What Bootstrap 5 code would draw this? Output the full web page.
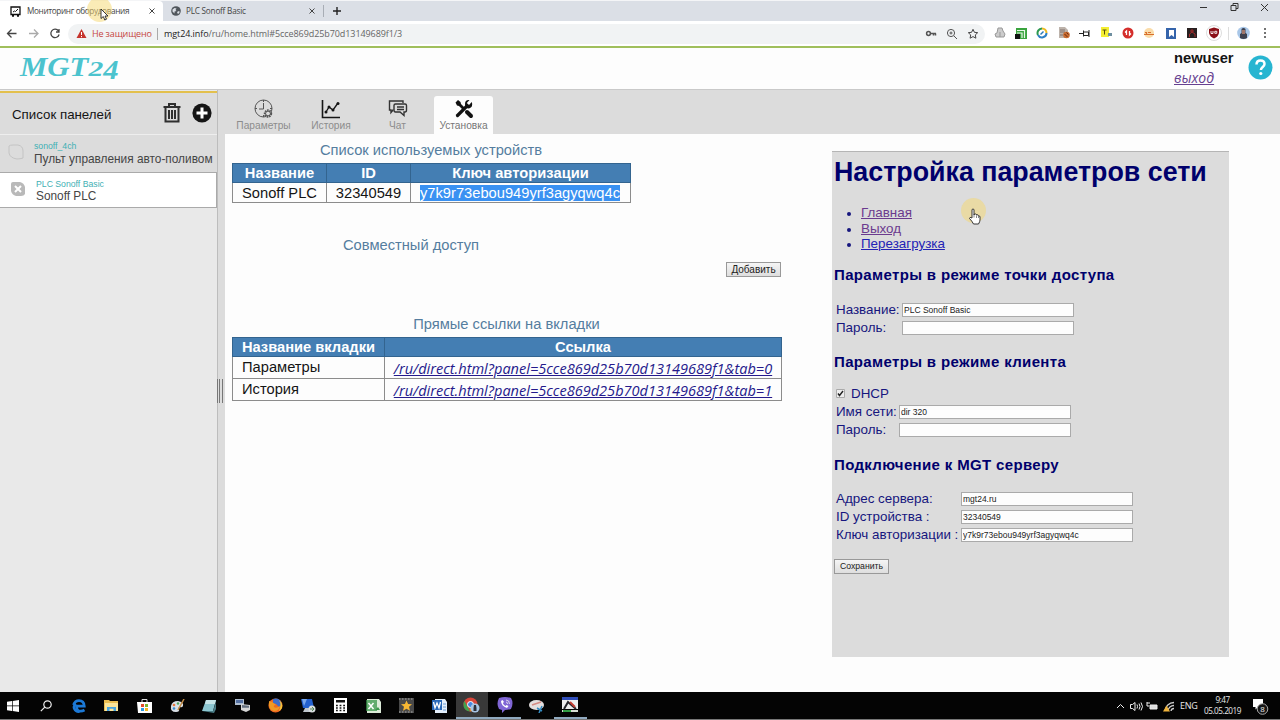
<!DOCTYPE html>
<html lang="ru">
<head>
<meta charset="utf-8">
<title>Мониторинг оборудования</title>
<link href="https://cdn.jsdelivr.net/npm/bootstrap@5.3.0/dist/css/bootstrap.min.css" rel="stylesheet">
<style>
body{width:1280px;height:720px;overflow:hidden;font:14.7px/18px "Liberation Sans",Arial,sans-serif;color:#151515;background:#fdfdfd;position:relative}
svg{display:block;flex:none}
.tabstrip{height:21px;background:#dbdfe6;border-top:1px solid #f4f5f7;font:8.2px/16px "Open Sans","Noto Sans",sans-serif;color:#454545}
.btab{height:20px}
.btab.on{width:163px;background:#fff;padding-left:10px;border-radius:0 4px 0 0}
.btab.off{width:160px;padding-left:8px}
.toolbar{height:25px;background:#fff}
.omni{height:20px;width:917px;margin-left:3px;background:#f1f3f4;border-radius:10px;padding-left:5px;font:9px/20px "Open Sans","Noto Sans",sans-serif;white-space:nowrap}
.cell{width:21.4px;display:flex;justify-content:center;flex:none}
.sitehead{height:44px;border-top:2px solid #a0bf5c;border-bottom:1px solid #c9c9c9;background:#fdfdfd}
.brand24{font:italic bold 27px/30px "Liberation Serif",serif;color:#4cc3ce;margin-left:20px;white-space:nowrap;transform:scaleX(1.14);transform-origin:0 50%}
.brand24 .two{font-size:26px;display:inline-block;transform:scaleY(.78);transform-origin:50% 76%}
.brand24 .four{display:inline-block;transform:translateY(3px)}
.side{width:218px;background:#e9e9e9;border-right:1px solid #bdbdbd}
.sidehead{height:44px;background:#dcdcdc;border-top:2px solid #e3c04d;border-bottom:1px solid #eee;padding:0 5px 0 12px;font-size:13.3px;margin-top:1px}
.panelitem{height:37px;background:#dcdcdc;color:#454545;font-size:11.85px;line-height:13px;white-space:nowrap}
.panelitem small{display:block;font-size:8.7px;line-height:12px;color:#3fb0b4}
.panelitem.sel{height:36px;background:#fff;border:1px solid #aaa;border-left:0}
.split{width:7px;background:#dcdcdc}
.grip{width:6px;height:24px;background:repeating-linear-gradient(90deg,#777 0 1px,#ddd 1px 2.4px)}
.tabsbar{height:44px;background:#dcdcdc;padding:6px 0 0 2px;font-size:10.2px;line-height:12px;color:#8c8c8c}
.apptab{height:38px;padding-top:3px;display:flex;flex-direction:column;align-items:center;justify-content:space-between;padding-bottom:2px}
.apptab.on{background:#fdfdfd;border-radius:3px 3px 0 0;color:#777}
.cap{color:#557d9f;text-align:center;font-size:14.7px;line-height:18px;white-space:nowrap}
.grid{border-collapse:collapse;table-layout:fixed;white-space:nowrap}
.grid th,.grid td{border:1px solid #8c8c8c;padding:0}
.grid th{background:#447eb3;color:#fff;text-align:center;border-color:#33648f;line-height:18px;height:19px}
.selx{background:#3991f2;color:#fff}
.dlink{font:italic 14.55px/20px "Open Sans","Noto Sans",sans-serif;color:#251a8c;text-decoration:underline}
.obtn{border:1px solid #999;background:linear-gradient(#f5f5f5,#dedede);color:#222;padding:0;border-radius:0;display:block;text-align:center}
.net{width:397px;height:506px;background:#dcdcdc;border-top:1px solid #b5b5b5;color:#16167e;margin:17px 0 0 51px;padding-left:2px;font-size:13.4px;line-height:18px;white-space:nowrap}
.net h1{font-size:26.8px;line-height:32px;font-weight:700;color:#00006c;margin:4px 0 17px}
.net h2{font-size:15px;line-height:18px;font-weight:700;color:#00006c;margin:0;letter-spacing:.35px}
.net ul{margin:0;padding-left:27px;line-height:15.5px;font-size:13.4px}
.net li::marker{font-size:12px}
.net a{text-decoration:underline}
.frow{display:flex;height:18px;align-items:center;padding-left:2px}
.fld{width:172px;height:14px;border:1px solid #aaa;background:#fdfdfd;font-size:8.5px;line-height:12px;padding:0 1px;color:#222;border-radius:0}
.task{height:27px;background:#040404;margin-top:0;font:9px/12px "Open Sans","Noto Sans",sans-serif;color:#e8e8e8}
.tcell{width:32.75px;height:27px;display:flex;align-items:center;justify-content:center;flex:none}
.tcell.run{border-bottom:2px solid #8fa9bf}
.glow{position:absolute;width:25px;height:25px;border-radius:50%;background:rgba(245,215,110,.5)}
.ptr{position:absolute}
</style>
</head>
<body class="d-flex flex-column">

<div class="tabstrip d-flex">
  <div class="btab on d-flex align-items-center">
    <svg width="11" height="11" viewBox="0 0 11 11"><path d="M1 1h9v7.500H1zM2 10h2M7 10h2" fill="none" stroke="#111" stroke-width="1.300"/><path d="M3 6l1.500-1 1 .5L8 3" fill="none" stroke="#111"/></svg>
    <span style="margin-left:6px;letter-spacing:-.35px">Мониторинг оборудования</span>
    <svg class="ms-auto" width="6" height="6" style="margin-right:8px" viewBox="0 0 6 6"><path d="M.5.5l5 5m0-5l-5 5" stroke="#444"/></svg>
  </div>
  <div class="btab off d-flex align-items-center">
    <svg width="10" height="10" viewBox="0 0 10 10"><circle cx="5" cy="5" r="4.800" fill="#50565c"/><path d="M1.500 3.500l2-1.500 2 .5-1 1.500 1 1-2 .5v2l-2-2zM6 6l2-1 .8 1-1.800 2.300z" fill="#dbdfe6"/></svg>
    <span style="margin-left:5px;letter-spacing:-.22px">PLC Sonoff Basic</span>
    <svg class="ms-auto" width="6" height="6" style="margin-right:8px" viewBox="0 0 6 6"><path d="M.5.5l5 5m0-5l-5 5" stroke="#444"/></svg>
  </div>
  <div class="d-flex align-items-center"><svg width="24" height="14" viewBox="0 0 24 14"><path d="M.5 1v12" stroke="#a8adb5"/><path d="M14 3v8m-4-4h8" stroke="#222" stroke-width="1.400"/></svg></div>
  <svg class="ms-auto" width="82" height="14" viewBox="0 0 82 14"><path d="M2 6.500h7M33 4.500h5v5h-5zM35 4.500v-2h5v5h-2M63 3l7 7m0-7l-7 7" fill="none" stroke="#333"/></svg>
</div>

<div class="toolbar d-flex align-items-center">
  <svg width="65" height="16" viewBox="0 0 65 16" fill="none" stroke-width="1.300"><path d="M16.500 7.500H8m3.500-4L7.500 7.500l4 4" stroke="#444"/><path d="M29 7.500h9m-4-4l4 4-4 4" stroke="#aaa"/><path d="M58.500 5a4.200 4.200 0 1 0 .6 3.500M59 3v3h-3" stroke="#444"/></svg>
  <div class="omni d-flex align-items-center">
    <svg style="margin-left:3px" width="11" height="11" viewBox="0 0 11 11"><path d="M5.500 1L10.500 10H.5z" fill="#c5342d"/><path d="M5.500 4v3m0 1v1.200" stroke="#fff"/></svg>
    <span style="margin-left:5px;color:#c5453f;width:60px;letter-spacing:-.15px">Не защищено</span>
    <span style="border-left:1px solid #aaa;height:12px;margin:0 6px 0 5px"></span>
    <span style="color:#666;letter-spacing:-.08px"><span style="color:#222">mgt24.info</span>/ru/home.html#5cce869d25b70d13149689f1/3</span>
    <div class="d-flex ms-auto" style="margin-right:1px">
      <span class="cell"><svg width="12" height="12" viewBox="0 0 12 12" fill="none" stroke="#555" stroke-width="1.500"><circle cx="3.500" cy="5.500" r="1.900"/><path d="M5.500 5.500H11M8.500 5.500v2M10.500 5.500v2"/></svg></span>
      <span class="cell"><svg width="12" height="12" viewBox="0 0 12 12" fill="none" stroke="#555"><circle cx="5" cy="5" r="3.600"/><path d="M8 8l3 3M3.500 5h3M5 3.500v3"/></svg></span>
      <span class="cell"><svg width="12" height="12" viewBox="0 0 12 12" fill="none" stroke="#444"><path d="M6 1.300l1.400 3 3.300.4-2.400 2.200.6 3.300L6 8.600l-2.900 1.600.6-3.300L1.300 4.700l3.300-.4z"/></svg></span>
    </div>
  </div>
  <div class="d-flex align-items-center" style="margin:-1px 0 0 4px">
    <span class="cell"><svg width="12" height="12" viewBox="0 0 12 12"><path d="M4 1h4l1 3 2 3-1 3H2L1 7l2-1zM6 5v5" fill="#ccc" stroke="#999"/></svg></span>
    <span class="cell"><svg width="12" height="12" viewBox="0 0 12 12"><path d="M1 1h11v11H1z" fill="#3aa43e"/><path d="M2 3.500h7.500V11M2 6h5v5" fill="none" stroke="#e8f7e8" stroke-width="1.200"/><path d="M0 7h5v5H0z" fill="#111"/></svg></span>
    <span class="cell"><svg width="12" height="12" viewBox="0 0 12 12" fill="none" stroke-width="2"><path d="M6 1.500A4.500 4.500 0 0 0 2 8" stroke="#2d9950"/><path d="M6 1.500A4.500 4.500 0 0 1 10.500 6" stroke="#edbb22"/><path d="M10.500 6A4.500 4.500 0 0 1 2 8" stroke="#2e80c4"/><path d="M4.500 7.500l3-3" stroke="#287ab8" stroke-width="1.500"/></svg></span>
    <span class="cell"><svg width="12" height="12" viewBox="0 0 12 12"><path d="M1 0h6l3 3v8H1z" fill="#bdb3ab"/><path d="M2 3h5M2 5h5M2 8h3" stroke="#80716a"/><circle cx="8.500" cy="8" r="3.300" fill="#c96a2e"/><path d="M6.500 7l3 3M8.500 5.500l2 2" stroke="#663015"/></svg></span>
    <span class="cell"><svg width="12" height="12" viewBox="0 0 12 12" fill="none" stroke="#222"><path d="M0 6.500h4M4.500 3.500v6M4.500 5h5v3.500h-5M10 3v7"/></svg></span>
    <span class="cell"><svg width="12" height="12" viewBox="0 0 12 12"><path d="M0 0h8v10H0z" fill="#f4ee32"/><path d="M1.500 3h4M3.500 3v4.500" stroke="#544c10"/><path d="M7 6h4v3H7z" fill="#6e8fa0"/></svg></span>
    <span class="cell"><svg width="12" height="12" viewBox="0 0 12 12"><circle cx="6" cy="6" r="5.500" fill="#d42d2a"/><path d="M4.500 8V4L3 5.500M7.500 4v4L9 6.500" stroke="#fff" stroke-width="1.300" fill="none"/></svg></span>
    <span class="cell"><svg width="12" height="12" viewBox="0 0 12 12"><circle cx="6" cy="6" r="5" fill="#fadcaa"/><path d="M1 7.500h10M2 5.500h1.500v2M5 5.500h3" stroke="#d9702d" stroke-width="1.200" fill="none"/></svg></span>
    <span class="cell"><svg width="12" height="12" viewBox="0 0 12 12"><path d="M1 1h10v11H1z" fill="#3564ab"/><path d="M4 3h5v7L6.500 8 4 10z" fill="#fff"/></svg></span>
    <span class="cell"><svg width="12" height="12" viewBox="0 0 12 12"><path d="M1 1h10v10H1z" fill="#272020"/><path d="M6 2v3l3 2v3M6 5L3.500 7v3M4 4h4" stroke="#a42b2b" fill="none"/></svg></span>
    <span class="cell"><svg width="16" height="16" viewBox="0 0 16 16"><circle cx="8" cy="8" r="7.500" fill="#fff" stroke="#ddd"/><path d="M8 2.500l5 1.500v4q-1 4-5 5.500Q4 12 3 8V4z" fill="#8b1018"/><path d="M5 6v2.500h2V6m1.800.3h2v2h-2z" stroke="#fff" fill="none" stroke-width=".9"/></svg></span>
    <span style="border-left:1px solid #ddd;height:13px;margin-left:4px"></span>
    <svg style="margin-left:8px" width="13" height="14" viewBox="0 0 13 14"><circle cx="6.500" cy="7" r="6.300" fill="#a9c7e8"/><path d="M4.500 3q2-2 4 0v4l1.500 1v4q-3.500 2-7 0V8l1.500-1z" fill="#3e414f"/><path d="M5 4h3v4H5z" fill="#a0766a"/></svg>
    <svg style="margin-left:12px" width="6" height="12" viewBox="0 0 6 12" fill="#444"><circle cx="3" cy="2" r="1"/><circle cx="3" cy="6" r="1"/><circle cx="3" cy="10" r="1"/></svg>
  </div>
</div>

<header class="sitehead d-flex">
  <div class="brand24" style="margin-top:4px">MGT<span class="two">2</span><span class="four">4</span></div>
  <div class="ms-auto" style="width:74px;line-height:20px">
    <div class="fw-bold" style="font-size:14.7px">newuser</div>
    <a style="font:italic 14px/19px 'Open Sans',sans-serif;color:#664090" href="#">выход</a>
  </div>
  <svg style="margin:7px 7px 0 0" width="25" height="25" viewBox="0 0 25 25"><circle cx="12.500" cy="12.500" r="12" fill="#27b5d1"/><path d="M8.500 9.500q0-4 4-4t4 3.600c0 3-3.600 2.900-3.600 6" fill="none" stroke="#fff" stroke-width="2.500"/><circle cx="12.800" cy="18.500" r="1.600" fill="#fff"/></svg>
</header>

<main class="d-flex flex-grow-1" style="min-height:0">
  <aside class="side d-flex flex-column">
    <div class="sidehead d-flex align-items-center"><span style="padding-top:2px">Список панелей</span>
      <svg class="ms-auto" width="18" height="21" viewBox="0 0 18 21" fill="none" stroke="#2f2f2f" stroke-width="2"><path d="M.5 4h17M6 3.500V1h6v2.500"/><path d="M2.500 5v13.500h13V5M6 7v9M9 7v9M12 7v9" stroke-width="2"/></svg>
      <svg style="margin:-1px 0 0 11px" width="20" height="20" viewBox="0 0 20 20"><circle cx="10" cy="10" r="9.600" fill="#161616"/><path d="M10 4.500v11M4.500 10h11" stroke="#fff" stroke-width="3"/></svg>
    </div>
    <div class="panelitem d-flex"><svg style="margin:9px 10px 0 8px" width="16" height="16" viewBox="0 0 16 16"><path d="M5 1h5q5 1 5 6v7q-3 1-6 1-7-1-8-6V2q1-1 4-1z" fill="none" stroke="#c4c4c4"/></svg><div style="padding-top:4px"><small style="line-height:14px">sonoff_4ch</small><span>Пульт управления авто-поливом</span></div></div>
    <div class="panelitem sel d-flex"><svg style="margin:8px 10px 0 10px" width="16" height="16" viewBox="0 0 16 16"><path d="M3 1h7q4 1 5 5v7q-1 2-4 2H6q-4-1-5-5V3q0-2 2-2z" fill="#b9b9b9"/><path d="M5 5l6 6m0-6l-6 6" stroke="#fff" stroke-width="2"/></svg><div style="padding-top:5px"><small>PLC Sonoff Basic</small><span>Sonoff PLC</span></div></div>
  </aside>
  <div class="split d-flex align-items-center"><div class="grip" style="margin-left:-1px"></div></div>
  <section class="flex-grow-1">
    <nav class="tabsbar d-flex">
      <div class="apptab" style="width:73px"><svg width="20" height="20" viewBox="0 0 20 20" fill="none" stroke="#555"><circle cx="9.500" cy="9.500" r="8.500"/><path d="M9.500 4v6H5M9.500 1v2M1 9.500h2M16 9.500h2M9.500 16v2"/><circle cx="14" cy="14.500" r="3.200" fill="#dcdcdc" stroke-width="2" stroke-dasharray="1.500 .8"/><circle cx="14" cy="14.500" r="2.400"/></svg><span>Параметры</span></div>
      <div class="apptab" style="width:62px"><svg width="20" height="20" viewBox="0 0 20 20" fill="none" stroke="#151515"><path d="M1.500 1v17.500H19" stroke-width="1.600"/><path d="M5 13l3-5 4 3 5-7" stroke-width="1.300"/><g fill="#151515" stroke="none"><circle cx="5" cy="13" r="1.500"/><circle cx="8" cy="8" r="1.500"/><circle cx="12" cy="11" r="1.500"/><circle cx="17" cy="4.500" r="1.500"/></g></svg><span>История</span></div>
      <div class="apptab" style="width:71px"><svg width="20" height="20" viewBox="0 0 20 20" fill="none" stroke="#333" stroke-width="1.400"><path d="M5.500 11H5l-2 2.500V11H1.500V2H15v2"/><path d="M6 6.500q0-1.500 1.500-1.500H17q1.500 0 1.500 1.500V11q0 2-1.500 2h-1v3.500L12 13H7.500Q6 13 6 11zM9 8h7M9 10.500h7"/></svg><span>Чат</span></div>
      <div class="apptab on" style="width:59px;margin-left:1px"><svg width="20" height="20" viewBox="0 0 20 20"><path d="M1.500 3.500l2.500-2.500 2.500 2 .5 2 4 4-2 2-4-4-2-.5z" fill="#111"/><path d="M13 13l4 4" stroke="#111" stroke-width="4" stroke-linecap="round"/><path d="M3.500 16.500L13 7" stroke="#111" stroke-width="3.200" stroke-linecap="round"/><path d="M17.800 3L15 6l-2.200-2L15.500 1Q11 .5 11 5t4 4.500q4.500-1.500 2.800-6.500z" fill="#111"/></svg><span>Установка</span></div>
    </nav>
    <div class="d-flex align-items-start">
      <div style="width:556px;padding:7px 0 0 7px">
        <div class="cap" style="width:398px;margin-bottom:4px">Список используемых устройств</div>
        <table class="grid" style="width:398px">
          <colgroup><col style="width:94px"><col style="width:84px"><col style="width:220px"></colgroup>
          <tr><th>Название</th><th>ID</th><th style="letter-spacing:.03px">Ключ авторизации</th></tr>
          <tr style="height:20px" class="text-center"><td>Sonoff PLC</td><td>32340549</td><td><span class="selx" style="margin-right:1px">y7k9r73ebou949yrf3agyqwq4c</span></td></tr>
        </table>
        <div class="cap" style="width:358px;margin-top:33px">Совместный доступ</div>
        <button class="obtn ms-auto" style="width:55px;height:15px;font-size:10px;line-height:12px;margin-top:8px">Добавить</button>
        <div class="cap" style="margin-top:38px;margin-bottom:4px">Прямые ссылки на вкладки</div>
        <table class="grid" style="width:549px">
          <colgroup><col style="width:152px"><col style="width:397px"></colgroup>
          <tr><th>Название вкладки</th><th>Ссылка</th></tr>
          <tr style="height:22px"><td style="padding:0 0 1px 9px">Параметры</td><td class="text-center"><a class="dlink" href="#">/ru/direct.html?panel=5cce869d25b70d13149689f1&amp;tab=0</a></td></tr>
          <tr style="height:22px"><td style="padding:0 0 1px 9px">История</td><td class="text-center"><a class="dlink" href="#">/ru/direct.html?panel=5cce869d25b70d13149689f1&amp;tab=1</a></td></tr>
        </table>
      </div>
      <div class="net">
        <h1>Настройка параметров сети</h1>
        <ul><li><a href="#" style="color:#6b3a8e">Главная</a></li><li><a href="#" style="color:#6b3a8e">Выход</a></li><li><a href="#" style="color:#2323b5">Перезагрузка</a></li></ul>
        <h2 style="margin:14px 0 17px">Параметры в режиме точки доступа</h2>
        <div class="frow"><span style="width:66px">Название:</span><input class="fld" value="PLC Sonoff Basic"></div>
        <div class="frow"><span style="width:66px">Пароль:</span><input class="fld"></div>
        <h2 style="margin:16px 0 14px">Параметры в режиме клиента</h2>
        <div class="frow"><svg width="9" height="9" viewBox="0 0 9 9"><path d="M.5.5h8v8h-8z" fill="#eee" stroke="#aaa"/><path d="M2 4.500l1.500 2L7 2" fill="none" stroke="#222" stroke-width="1.400"/></svg><span style="margin-left:6px">DHCP</span></div>
        <div class="frow"><span style="width:63px">Имя сети:</span><input class="fld" value="dir 320"></div>
        <div class="frow"><span style="width:63px">Пароль:</span><input class="fld"></div>
        <h2 style="margin:17px 0 16px">Подключение к MGT серверу</h2>
        <div class="frow"><span style="width:125px">Адрес сервера:</span><input class="fld" value="mgt24.ru"></div>
        <div class="frow"><span style="width:125px">ID устройства :</span><input class="fld" value="32340549"></div>
        <div class="frow"><span style="width:125px">Ключ авторизации :</span><input class="fld" value="y7k9r73ebou949yrf3agyqwq4c"></div>
        <button class="obtn" style="width:55px;height:15px;font-size:8.7px;line-height:12px;margin-top:15px">Сохранить</button>
      </div>
    </div>
  </section>
</main>

<footer class="task d-flex align-items-center">
  <div class="d-flex" style="margin-left:-3px">
    <span class="tcell"><svg width="12" height="12" viewBox="0 0 12 12" fill="#fff"><path d="M0 1.800L5 1v4.600H0zM5.700.9L12 0v5.600H5.700zM0 6.300h5V11l-5-.8zM5.700 6.300H12V12l-6.300-.9z"/></svg></span>
    <span class="tcell"><svg width="12" height="12" viewBox="0 0 12 12" fill="none" stroke="#eee" stroke-width="1.200"><circle cx="7.500" cy="4.500" r="3.700"/><path d="M4.800 7.200L.8 11.200"/></svg></span>
    <span class="tcell"><svg width="14" height="14" viewBox="0 0 14 14" fill="none" stroke="#1c79d6" stroke-width="2.700"><path d="M1.500 6Q3 1.600 7 1.600q5 0 5.300 5.600H4.500q0 5 4 5 2 0 4-1.200"/><path d="M4 5q-3 2-1.500 5 1.500 3 5 2.600"/></svg></span>
    <span class="tcell"><svg width="15" height="13" viewBox="0 0 15 13"><path d="M0 1h5l1 1h8v10H0z" fill="#e9bd51"/><path d="M1 4h13v8H1z" fill="#fae59b"/><path d="M3 12V8h9v4H9.500V9.800h-4V12z" fill="#49a5df"/></svg></span>
    <span class="tcell"><svg width="15" height="15" viewBox="0 0 15 15"><path d="M5 4V1.500h5V4" fill="none" stroke="#ddd"/><path d="M0 4h15v11H1z" fill="#fff"/><path d="M4 6h3v3H4z" fill="#e34b2b"/><path d="M8 6h3v3H8z" fill="#7bb52d"/><path d="M4 10h3v3H4z" fill="#2b9ce3"/><path d="M8 10h3v3H8z" fill="#f3b723"/></svg></span>
    <span class="tcell"><svg width="15" height="14" viewBox="0 0 15 14"><path d="M1 7q1-5 7-5 6 1 5 5-1 2-3 1-2 0-1 2 1 3-3 3Q0 13 1 7z" fill="#d8dfe6"/><circle cx="4" cy="6" r="1.300" fill="#e5763e"/><circle cx="8" cy="4.500" r="1.200" fill="#4ea25c"/><circle cx="4" cy="9.500" r="1.300" fill="#398acc"/><path d="M14 0L8 11" stroke="#c58c43" stroke-width="1.500"/></svg></span>
    <span class="tcell"><svg width="15" height="14" viewBox="0 0 15 14"><path d="M4 1h10l-3 11H0z" fill="#8cc6d0"/><path d="M4 1h10l-1 4H3z" fill="#c6e4e7"/><path d="M0 12h11l3-9v7l-2 4z" fill="#4b7d86"/></svg></span>
    <span class="tcell"><svg width="15" height="13" viewBox="0 0 15 13"><path d="M0 0h9v6H0z" fill="#aebdd0"/><path d="M1 1h7v3H1z" fill="#5571a2"/><path d="M6 5l9 1v5l-4 2-5-2z" fill="#d6d6d6"/><path d="M7 6l7 .8v2H7z" fill="#626e7e"/></svg></span>
    <span class="tcell"><svg width="15" height="15" viewBox="0 0 15 15"><circle cx="7.500" cy="7.500" r="7" fill="#ee6a21"/><path d="M5 1q6-2 8 3 1 4-2 5L8 6 5 5z" fill="#3f6ec9"/><path d="M1 3l3 1 4 3q-3 0-2 2 2 2 6-1-1 5-6 5Q0 12 1 3z" fill="#f09a24"/><path d="M11 2q4 3 3 8-1 2-3 3 3-6 0-11z" fill="#f7c537"/></svg></span>
    <span class="tcell"><svg width="16" height="15" viewBox="0 0 16 15"><path d="M1 1h11l2 9H3z" fill="#2461cf"/><path d="M2 1h5l-3 7z" fill="#7aa8ec"/><path d="M5 10h6v4H3z" fill="#c0c7cf"/><circle cx="12" cy="11" r="3.500" fill="#d9dedf"/><path d="M10 11h4m-2-2l2 2-2 2" stroke="#58855a" fill="none"/></svg></span>
    <span class="tcell"><svg width="13" height="15" viewBox="0 0 13 15"><path d="M0 0h13v15H0z" fill="#fff"/><path d="M2 2h9v2.500H2z" fill="#111"/><path d="M2 7.500h9M2 10h9M2 12.500h9" stroke="#111" stroke-width="1.500" stroke-dasharray="1.800 1.800"/></svg></span>
    <span class="tcell"><svg width="15" height="14" viewBox="0 0 15 14"><path d="M1 0h12l2 3v11H1z" fill="#dcebd8"/><path d="M0 1h11v11H0z" fill="#3b974b" opacity=".75"/><path d="M2.500 4l5 6m0-6l-5 6" stroke="#fff" stroke-width="1.500"/><path d="M9 11l3-3 2 3z" fill="#3b974b"/></svg></span>
    <span class="tcell"><svg width="15" height="15" viewBox="0 0 15 15"><path d="M0 0h15v15H0z" fill="#484848"/><path d="M0 1h15M0 14h15" stroke="#aaa" stroke-dasharray="1.500 1.500"/><path d="M7.500 2.500l1.600 3.500 3.900.3-3 2.500 1 3.900-3.500-2-3.500 2 1-3.900-3-2.500 3.900-.3z" fill="#f6b733"/></svg></span>
    <span class="tcell"><svg width="15" height="14" viewBox="0 0 15 14"><path d="M3 0h10l2 3v11H3z" fill="#e4effb"/><path d="M0 1h10v10H0z" fill="#2868b8"/><path d="M1.500 3l1.500 6 2-5 2 5 1.500-6" stroke="#fff" stroke-width="1.300" fill="none"/><path d="M11 5h3M11 8h3M11 11h3" stroke="#689ad2"/></svg></span>
    <span class="tcell run" style="background:#393939"><svg width="17" height="16" viewBox="0 0 17 16"><circle cx="7.500" cy="7.500" r="7" fill="#d9463a"/><path d="M1.500 4L7 14.500Q0 14 .5 6z" fill="#40a34f"/><path d="M7.500 7h7q0 6-7 7.500z" fill="#eec432"/><circle cx="7.500" cy="7.500" r="3" fill="#4787e0" stroke="#fff"/><circle cx="12" cy="11" r="4.500" fill="#a7c5e5"/><path d="M10.500 14v-3l.5-3h2l.5 3v3z" fill="#2c303b"/></svg></span>
    <span class="tcell run"><svg width="16" height="16" viewBox="0 0 16 16"><path d="M2 1q6-2 12 0 3 5 0 11-3 1-6 1l-3 3v-3l-3-1Q-1 7 2 1z" fill="#8066d5"/><path d="M9 3q3.500 0 3.500 4M9 5q1.500 0 1.500 2" fill="none" stroke="#eee" stroke-width=".8"/><path d="M4 4q0 5 6 7l1.500-2-2-1-1 1Q6.500 8 5.800 6L7 5 5.500 3z" fill="#fff"/></svg></span>
    <span class="tcell"><svg width="16" height="14" viewBox="0 0 16 14"><ellipse cx="7.500" cy="6" rx="7.500" ry="5" fill="#e4dfdf"/><path d="M3 6l9-3" stroke="#d68a82" stroke-width="1.500"/><path d="M8 9l5 3m0-5l-3 7" stroke="#348bc1" stroke-width="1.500"/></svg></span>
    <span class="tcell run"><svg width="16" height="16" viewBox="0 0 16 16"><path d="M0 0h16v12H0z" fill="#eee"/><path d="M0 0h16v3H0z" fill="#304db9"/><path d="M2 12l4-7 8 7" stroke="#24242a" stroke-width="2" fill="none"/><path d="M8 5l5 5" stroke="#c33f33" stroke-width="2"/><path d="M0 14h16" stroke="#d8dfd5" stroke-width="2"/><path d="M1 14h8" stroke="#309d43" stroke-width="2"/></svg></span>
  </div>
  <svg class="ms-auto" width="60" height="16" viewBox="0 0 60 16" fill="none" stroke="#eee"><path d="M1 10l3.500-3.500L8 10"/><path d="M14.500 6.500h2l2.500-2v8l-2.500-2h-2zM21 6.500q1 2 0 4M23 5.500q2 3 0 6M25 4.500q3 4 0 8"/><path d="M34 7h7v4h-7z" fill="#ddd"/><path d="M31 4v4h2M31 5h3"/><path d="M49 13A9 9 0 0 1 58 4.500M52 13A6 6 0 0 1 58 7.500M55 13A3 3 0 0 1 58 10.500" stroke="#ccc" stroke-width="1.300"/><path d="M47 13.500l3.500-6L54 13.500z" fill="#efb33c" stroke="none"/></svg>
  <span style="margin-left:4px;width:17px;letter-spacing:-.3px">ENG</span>
  <div class="text-center" style="width:37px;margin-left:7px;margin-top:-1px;font-size:8.2px;line-height:11.500px;letter-spacing:-.5px;white-space:nowrap">9:47<br>05.05.2019</div>
  <svg style="margin:0 9px 0 10px" width="20" height="18" viewBox="0 0 20 18"><path d="M2 2h10v8H7l-2.500 2.500V10H2z" fill="#fff"/><circle cx="11.500" cy="12" r="5.300" fill="#161616" stroke="#aaa"/><text x="9.300" y="14.900" font-size="8" fill="#eee">8</text></svg>
</footer>
<div style="height:1px;background:#777"></div>

<div class="glow" style="left:87px;top:-3px"></div>
<svg class="ptr" style="left:100px;top:8px" width="9" height="13" viewBox="0 0 9 13"><path d="M1 1v9.500l2.300-2 1.500 3.500 1.700-.8L5 8h3z" fill="#fff" stroke="#222" stroke-width=".9"/></svg>
<div class="glow" style="left:961px;top:198px"></div>
<svg class="ptr" style="left:968px;top:208px" width="13" height="17" viewBox="0 0 13 17"><path d="M4 10V2q0-1 1-1t1 1v5q0-1.500 1.500-1t1 1q1.800-.8 2 .7 1.500 0 1.500 1.300v3q0 1.500-1.500 4H5.500Q4 13 1.500 10.500 1.500 8.500 4 10z" fill="#fff" stroke="#222" stroke-width=".9"/><path d="M6 7v2.500M8.500 7.500V10M10.500 8v2" stroke="#555" stroke-width=".7"/></svg>
</body>
</html>
